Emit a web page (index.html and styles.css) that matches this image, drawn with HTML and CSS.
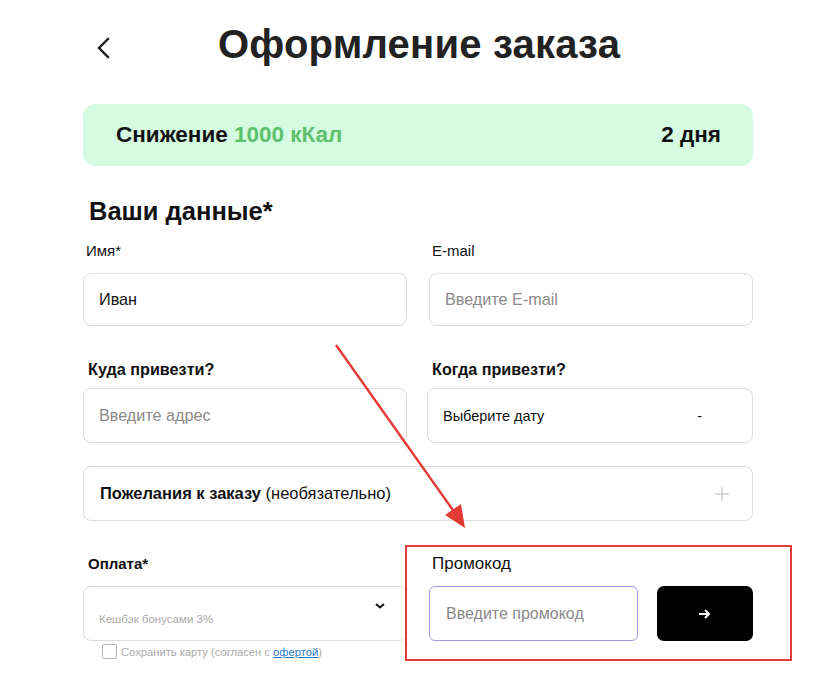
FILE: index.html
```html
<!DOCTYPE html>
<html lang="ru">
<head>
<meta charset="utf-8">
<title>Оформление заказа</title>
<link rel="stylesheet" href="styles.css">
</head>
<body>
<div class="page">
  <header class="top">
    <span class="back">
      <svg width="14" height="22" viewBox="0 0 14 22"><path d="M12 2 L3 11 L12 20" fill="none" stroke="#222" stroke-width="2.4" stroke-linecap="square"/></svg>
    </span>
    <h1 class="title">Оформление заказа</h1>
  </header>

  <div class="banner">
    <span class="banner-name">Снижение <span class="green">1000 кКал</span></span>
    <span class="banner-days">2 дня</span>
  </div>

  <h2 class="section">Ваши данные*</h2>

  <div class="row row-1">
    <div class="field">
      <div class="label">Имя*</div>
      <div class="input tall">Иван</div>
    </div>
    <div class="field">
      <div class="label">E-mail</div>
      <div class="input tall placeholder">Введите E-mail</div>
    </div>
  </div>

  <div class="row row-2">
    <div class="field">
      <div class="label bold">Куда привезти?</div>
      <div class="input placeholder">Введите адрес</div>
    </div>
    <div class="field">
      <div class="label bold">Когда привезти?</div>
      <div class="input date"><span>Выберите дату</span><span class="dash">-</span></div>
    </div>
  </div>

  <div class="wishes">
    <span><b>Пожелания к заказу</b> (необязательно)</span>
    <svg class="plus" width="14" height="14" viewBox="0 0 14 14"><path d="M7 0V14M0 7H14" stroke="#cfcfcf" stroke-width="1.5"/></svg>
  </div>

  <div class="row row-3">
    <div class="field">
      <div class="label bold pay">Оплата*</div>
      <div class="select">
        <span class="cash">Кешбэк бонусами 3%</span>
        <svg class="chev" width="10" height="6" viewBox="0 0 10 6"><path d="M1 1 L5 4.5 L9 1" fill="none" stroke="#111" stroke-width="2"/></svg>
      </div>
      <div class="save">
        <span class="box"></span>
        <span>Сохранить карту (согласен с <a class="offer">офертой</a>)</span>
      </div>
    </div>
    <div class="field promo">
      <div class="label">Промокод</div>
      <div class="promo-row">
        <div class="input promo-input placeholder">Введите промокод</div>
        <button class="go">
          <svg width="12" height="10" viewBox="0 0 12 10"><path d="M0 5H10M6 1L10 5L6 9" fill="none" stroke="#fff" stroke-width="2"/></svg>
        </button>
      </div>
    </div>
  </div>

  <div class="highlight"></div>
  <svg class="pointer" width="828" height="688" viewBox="0 0 828 688">
    <line x1="336" y1="345" x2="455" y2="513" stroke="#e53935" stroke-width="2.4"/>
    <polygon points="465,528 445,515 461,504" fill="#e53935"/>
  </svg>
</div>
</body>
</html>
```

FILE: styles.css
```css
* { box-sizing: border-box; }
html, body { margin: 0; padding: 0; background: #fff; }
body {
  font-family: "Liberation Sans", Arial, sans-serif;
  color: #111;
  width: 828px;
  height: 688px;
  overflow: hidden;
}
.page {
  position: relative;
  width: 828px;
  height: 688px;
  padding-left: 83px;
}
.top {
  display: flex;
  align-items: flex-start;
  height: 104px;
  padding-top: 20px;
}
.back {
  display: block;
  width: 135px;
  padding-left: 13px;
  padding-top: 17px;
}
.back svg { display: block; }
.title {
  margin: 0;
  font-size: 40px;
  line-height: 48px;
  font-weight: 700;
  color: #222;
  letter-spacing: 0.2px;
}
.banner {
  width: 670px;
  height: 62px;
  background: #d5fbe1;
  border-radius: 12px;
  display: flex;
  align-items: center;
  justify-content: space-between;
  padding: 0 32px 0 33px;
  font-size: 22.5px;
  font-weight: 700;
  color: #111;
}
.green { color: #5cc06c; }
.section {
  margin: 31px 0 0 6px;
  font-size: 25.5px;
  line-height: 28px;
  font-weight: 700;
  color: #111;
}
.row {
  display: grid;
  width: 670px;
}
.row-1 { grid-template-columns: 324px 324px; column-gap: 22px; margin-top: 17px; }
.row-2 { grid-template-columns: 324px 326px; column-gap: 20px; margin-top: 34px; }
.row-3 { grid-template-columns: 324px 324px; column-gap: 22px; margin-top: 34px; }
.label {
  font-size: 15px;
  line-height: 18px;
  padding-left: 3px;
  color: #111;
  margin-bottom: 13px;
}
.label.bold {
  font-size: 16.2px;
  font-weight: 700;
  padding-left: 5px;
  margin-bottom: 10px;
}
.label.pay { font-size: 15px; }
.row-2 .field + .field .label { padding-left: 5px; }
.row-3 .label { margin-bottom: 13px; }
.promo .label { font-weight: 400; font-size: 17px; padding-left: 3px; }
.input {
  height: 55px;
  border: 1px solid #dcdcdc;
  border-radius: 8px;
  display: flex;
  align-items: center;
  padding-left: 15px;
  font-size: 16.2px;
  color: #111;
}
.input.tall { height: 53px; }
.placeholder { color: #8a8a8a; }
.date {
  justify-content: space-between;
  padding-left: 15px;
  padding-right: 50px;
  font-size: 14.5px;
}
.wishes {
  margin-top: 23px;
  width: 670px;
  height: 55px;
  border: 1px solid #dcdcdc;
  border-radius: 8px;
  display: flex;
  align-items: center;
  justify-content: space-between;
  padding: 0 23px 0 16px;
  font-size: 16.5px;
}
.wishes b { font-weight: 700; }
.select {
  height: 55px;
  border: 1px solid #dcdcdc;
  border-radius: 8px;
  position: relative;
  display: flex;
  align-items: flex-end;
  justify-content: space-between;
  padding: 0 21px 14px 15px;
}
.cash {
  font-size: 11.5px;
  color: #a9a9a9;
  line-height: 14px;
}
.chev { align-self: center; margin-top: -2px; }
.save {
  display: flex;
  align-items: center;
  gap: 4px;
  margin: 3px 0 0 19px;
  font-size: 11.2px;
  color: #a9a9a9;
}
.box {
  width: 15px;
  height: 15px;
  border: 1px solid #b5b5b5;
  border-radius: 2px;
}
.offer {
  color: #2478c2;
  text-decoration: underline;
}
.promo-row {
  display: flex;
  gap: 19px;
}
.promo-input {
  width: 209px;
  height: 55px;
  border: 1px solid #a597e6;
  border-radius: 6px;
  padding-left: 16px;
  font-size: 16px;
}
.go {
  width: 96px;
  height: 55px;
  border: none;
  border-radius: 7px;
  background: #000;
  display: flex;
  align-items: center;
  justify-content: center;
  padding: 0;
}
.highlight {
  position: absolute;
  left: 405px;
  top: 545px;
  width: 387px;
  height: 116px;
  border: 2px solid #e03c3c;
  pointer-events: none;
}
.pointer {
  position: absolute;
  left: 0;
  top: 0;
  pointer-events: none;
}
```
